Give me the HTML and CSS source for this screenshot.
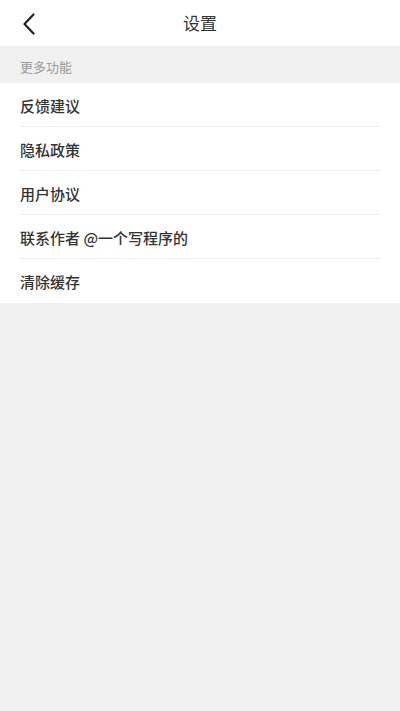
FILE: index.html
```html
<!DOCTYPE html>
<html lang="zh">
<head>
<meta charset="utf-8">
<meta name="viewport" content="width=device-width, initial-scale=1">
<title>设置</title>
<link rel="stylesheet" href="styles.css">
</head>
<body>
<div class="page">
  <header class="navbar">
    <button class="back" aria-label="返回">
      <svg width="14" height="22" viewBox="0 0 14 22" fill="none"><path d="M11.5 1.5 L2.5 11 L11.5 20.5" stroke="#222" stroke-width="2.2" stroke-linecap="round" stroke-linejoin="round"/></svg>
    </button>
    <h1 class="title">设置</h1>
  </header>
  <div class="section-title">更多功能</div>
  <ul class="list">
    <li class="item">反馈建议</li>
    <li class="item">隐私政策</li>
    <li class="item">用户协议</li>
    <li class="item">联系作者 @一个写程序的</li>
    <li class="item">清除缓存</li>
  </ul>
</div>
</body>
</html>
```

FILE: styles.css
```css
* { box-sizing: border-box; }
html, body {
  margin: 0;
  padding: 0;
  background: #f0f0f0;
  font-family: "Noto Sans CJK SC", "Noto Sans", sans-serif;
}
.page {
  min-height: 711px;
  background: #f0f0f0;
}
.navbar {
  height: 46px;
  background: #fff;
  display: flex;
  align-items: center;
  justify-content: center;
  position: relative;
}
.back {
  position: absolute;
  left: 22px;
  top: 13px;
  padding: 0;
  border: 0;
  background: none;
  width: 20px;
  height: 22px;
  display: flex;
  align-items: center;
  justify-content: flex-start;
}
.title {
  margin: 0;
  font-size: 17px;
  font-weight: normal;
  color: #333;
  line-height: 46px;
}
.section-title {
  height: 37px;
  padding-top: 4px;
  line-height: 33px;
  padding-left: 20px;
  font-size: 13px;
  color: #9a9a9a;
  background: #f0f0f0;
}
.list {
  list-style: none;
  margin: 0;
  padding: 0 20px;
  background: #fff;
}
.item {
  height: 44px;
  display: flex;
  align-items: center;
  padding-top: 1px;
  font-size: 15px;
  font-weight: 500;
  color: #333;
  border-bottom: 1px solid #eeeeee;
}
.item:last-child {
  border-bottom: 0;
}
```
